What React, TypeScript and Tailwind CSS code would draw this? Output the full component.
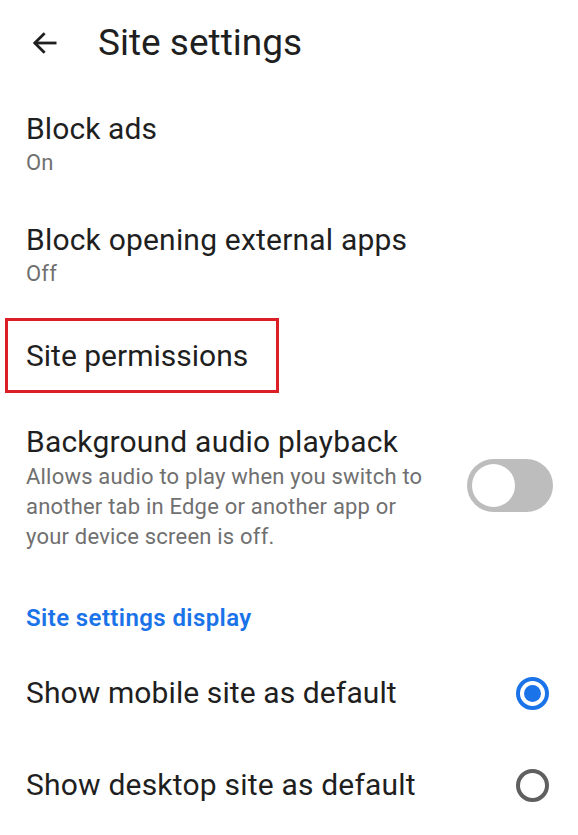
import { useState } from "react";

function BackArrow() {
  return (
    <svg width="26" height="22" viewBox="0 0 26 22" fill="none" className="text-[#1f1f1f]">
      <path d="M24.5 11H2.8" stroke="currentColor" strokeWidth="2.8" />
      <path d="M12.6 1.2L2.8 11l9.8 9.8" stroke="currentColor" strokeWidth="2.8" />
    </svg>
  );
}

function Toggle({ on }: { on: boolean }) {
  return (
    <div
      className={`w-[86px] h-[53px] rounded-full p-[5px] flex items-center flex-shrink-0 ${
        on ? "bg-[#1a73e8] justify-end" : "bg-[#bdbdbd] justify-start"
      }`}
    >
      <div className="w-[43px] h-[43px] rounded-full bg-white" />
    </div>
  );
}

function Radio({ checked }: { checked: boolean }) {
  return checked ? (
    <div className="w-[33px] h-[33px] rounded-full border-[4px] border-[#1a73e8] flex items-center justify-center flex-shrink-0">
      <div className="w-[17px] h-[17px] rounded-full bg-[#1a73e8]" />
    </div>
  ) : (
    <div className="w-[33px] h-[33px] rounded-full border-[4px] border-[#5f5f5f] flex-shrink-0" />
  );
}

export default function App() {
  const [mobileDefault, setMobileDefault] = useState(true);

  return (
    <div
      className="w-[578px] h-[835px] bg-white text-[#1f1f1f] overflow-hidden"
      style={{ fontFamily: "Roboto, 'Noto Sans', sans-serif" }}
    >
      {/* Top bar */}
      <div className="h-[86px] flex items-center pl-[32px]">
        <BackArrow />
        <h1 className="ml-[40px] text-[37px] leading-[44px] font-normal">Site settings</h1>
      </div>

      <div className="pt-[25px]">
        {/* Block ads */}
        <div className="px-[26px]">
          <p className="text-[30px] leading-[36px] tracking-[0.1px]">Block ads</p>
          <p className="text-[22px] leading-[32px] tracking-[0.2px] text-[#707070]">On</p>
        </div>

        {/* Block opening external apps */}
        <div className="px-[26px] mt-[43px]">
          <p className="text-[30px] leading-[36px] tracking-[0.2px]">Block opening external apps</p>
          <p className="text-[22px] leading-[32px] tracking-[0.2px] text-[#707070]">Off</p>
        </div>

        {/* Site permissions (highlighted) */}
        <div className="mt-[28px] ml-[5px] w-[274px] h-[75px] border-[3px] border-[#dc1f26] flex items-center pl-[18px]">
          <p className="text-[30px] leading-[36px] tracking-[0px]">Site permissions</p>
        </div>

        {/* Background audio playback */}
        <div className="mt-[31px] pl-[26px] pr-[25px] flex items-center justify-between">
          <div>
            <p className="text-[30px] leading-[36px] tracking-[0.2px]">Background audio playback</p>
            <p className="mt-[2px] text-[22px] leading-[30px] tracking-[0.2px] text-[#707070]">
              Allows audio to play when you switch to
              <br />
              another tab in Edge or another app or
              <br />
              your device screen is off.
            </p>
          </div>
          <div className="mb-[6px]">
            <Toggle on={false} />
          </div>
        </div>

        {/* Section header */}
        <p className="mt-[51px] px-[26px] text-[24px] leading-[30px] font-semibold tracking-[0.4px] text-[#1a73e8]">
          Site settings display
        </p>

        <div className="mt-[14px]">
          <div
            className="h-[92px] pl-[26px] pr-[29px] flex items-center justify-between"
            onClick={() => setMobileDefault(true)}
          >
            <p className="text-[30px] leading-[36px] tracking-[0.1px]">Show mobile site as default</p>
            <Radio checked={mobileDefault} />
          </div>
          <div
            className="h-[92px] pl-[26px] pr-[29px] flex items-center justify-between"
            onClick={() => setMobileDefault(false)}
          >
            <p className="text-[30px] leading-[36px] tracking-[0.2px]">Show desktop site as default</p>
            <Radio checked={!mobileDefault} />
          </div>
        </div>
      </div>
    </div>
  );
}
